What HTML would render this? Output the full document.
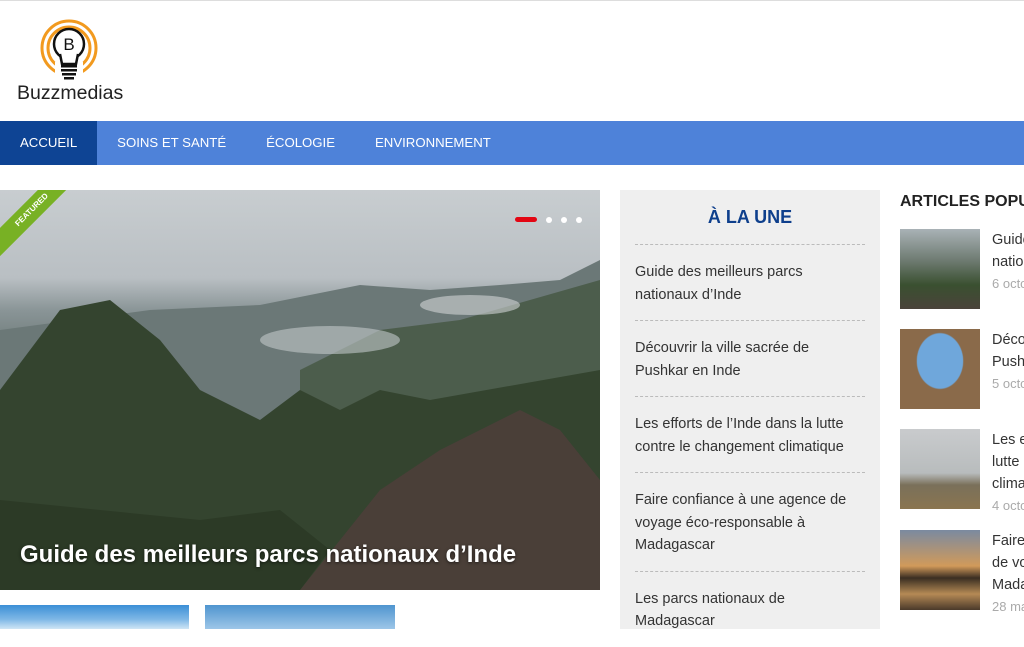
<!DOCTYPE html>
<html><head><meta charset="utf-8">
<style>
*{margin:0;padding:0;box-sizing:border-box}
body{width:1024px;height:629px;overflow:hidden;background:#fff;font-family:"Liberation Sans","DejaVu Sans",sans-serif;position:relative}
.topline{position:absolute;top:0;left:0;width:1024px;height:1px;background:#ddd}
.logo{position:absolute;left:17px;top:19px;width:110px;height:90px}
.logo .name{position:absolute;left:0;top:63px;font-size:19.5px;color:#222;white-space:nowrap}
nav{position:absolute;top:121px;left:0;width:1024px;height:44px;background:#4e82d9}
nav a{float:left;height:44px;line-height:44px;padding:0 20px;color:#fff;font-size:13.2px;text-decoration:none}
nav a.on{background:#0e4494}
.hero{position:absolute;left:0;top:190px;width:600px;height:400px;overflow:hidden;
background:linear-gradient(180deg,#c8cdd0 0%,#b9bfc3 22%,#8a9597 30%,#6d7a78 40%,#4d5b4e 55%,#3a4834 70%,#2f3a2a 100%)}
.hero h2{position:absolute;left:20px;top:351px;color:#fff;font-size:24px;font-weight:bold;text-shadow:0 1px 3px rgba(0,0,0,.6);white-space:nowrap}
.dots{position:absolute;left:515px;top:21px}
.dots span{display:inline-block;width:6px;height:6px;border-radius:3px;background:#fff;margin-left:9px;vertical-align:middle}
.dots span.a{width:22px;height:5px;background:#e30613;margin-left:0}
.feat{position:absolute;left:-28px;top:10px;width:120px;height:20px;background:#78b124;transform:rotate(-45deg);color:#fff;font-size:8px;font-weight:bold;text-align:center;line-height:20px}
.une{position:absolute;left:620px;top:190px;width:260px;height:439px;background:#efefef}
.une h3{text-align:center;color:#0e3f8c;font-size:18px;font-weight:bold;margin-top:17px;height:37px}
.une .item{margin:0 15px;border-top:1px dashed #bbb;padding:16px 0 14px;font-size:14.5px;line-height:22.5px;color:#333}
.pop{position:absolute;left:900px;top:190px;width:124px;height:439px;overflow:hidden}
.pop h3{font-size:16px;font-weight:bold;color:#222;white-space:nowrap;margin-top:3px}
.pi{position:absolute;left:0;width:200px}
.pi .t{position:absolute;left:0;top:0;width:80px;height:80px}
.pi .x{position:absolute;left:92px;top:0;font-size:14.5px;line-height:22px;color:#333;white-space:nowrap}
.pi .d{color:#aaa;font-size:13px}
.b1{position:absolute;left:0;top:605px;width:189px;height:24px;background:linear-gradient(180deg,#3b8fd6,#7fb8e6 60%,#cfe5f5)}
.b2{position:absolute;left:205px;top:605px;width:190px;height:24px;background:linear-gradient(180deg,#4f95cf,#9dc6e8)}
</style></head><body>
<div class="topline"></div>
<div class="logo">
<svg width="110" height="64" viewBox="0 0 110 64">
<circle cx="52" cy="29" r="27" fill="none" stroke="#f29a1f" stroke-width="3"/>
<circle cx="52" cy="29" r="21" fill="none" stroke="#f29a1f" stroke-width="3"/>
<rect x="38" y="43" width="28" height="21" fill="#fff"/>
<circle cx="52" cy="25" r="15" fill="#fff" stroke="#111" stroke-width="2.5"/>
<path d="M43 35 L45 45 L59 45 L61 35" fill="#fff" stroke="#111" stroke-width="2.5"/>
<rect x="44" y="46" width="16" height="2.5" fill="#111"/><rect x="44" y="50" width="16" height="2.5" fill="#111"/><rect x="45" y="54" width="14" height="2.5" fill="#111"/><rect x="47" y="58" width="10" height="2.5" fill="#111"/>
<text x="52" y="31" text-anchor="middle" font-family="Liberation Sans,sans-serif" font-size="17" fill="#111">B</text>
</svg>
<div class="name">Buzzmedias</div>
</div>
<nav><a class="on">ACCUEIL</a><a>SOINS ET SANTÉ</a><a>ÉCOLOGIE</a><a>ENVIRONNEMENT</a></nav>
<div class="hero">
<svg width="600" height="400" style="position:absolute;left:0;top:0">
<path d="M0 140 L150 120 L260 115 L360 95 L430 100 L500 95 L560 90 L600 70 L600 400 L0 400Z" fill="#6b7877"/>
<path d="M300 180 L380 140 L460 130 L530 110 L600 90 L600 400 L300 400Z" fill="#4c5d4c"/>
<path d="M0 200 L60 120 L110 110 L160 150 L200 200 L260 230 L300 200 L340 220 L380 200 L430 210 L600 180 L600 400 L0 400Z" fill="#34442f"/>
<path d="M300 400 L380 300 L440 260 L520 220 L560 240 L600 290 L600 400Z" fill="#4a3f38"/>
<path d="M0 400 L0 310 L100 320 L200 330 L280 320 L330 360 L300 400Z" fill="#2c3a26"/>
<ellipse cx="330" cy="150" rx="70" ry="14" fill="#c2c8ca" opacity=".6"/>
<ellipse cx="470" cy="115" rx="50" ry="10" fill="#d0d4d6" opacity=".6"/>
</svg>
<div class="feat">FEATURED</div>
<div class="dots"><span class="a"></span><span></span><span></span><span></span></div>
<h2>Guide des meilleurs parcs nationaux d’Inde</h2>
</div>
<div class="une">
<h3>À LA UNE</h3>
<div class="item">Guide des meilleurs parcs<br>nationaux d’Inde</div>
<div class="item">Découvrir la ville sacrée de<br>Pushkar en Inde</div>
<div class="item">Les efforts de l’Inde dans la lutte<br>contre le changement climatique</div>
<div class="item">Faire confiance à une agence de<br>voyage éco-responsable à<br>Madagascar</div>
<div class="item">Les parcs nationaux de<br>Madagascar</div>
</div>
<div class="pop">
<h3>ARTICLES POPULAIRES</h3>
<div class="pi" style="top:39px"><div class="t" style="background:linear-gradient(180deg,#a9b2b6,#6d7a70 40%,#3a5030 70%,#4a433a)"></div><div class="x">Guide des meilleurs<br>nationaux<br><span class="d">6 octobre</span></div></div>
<div class="pi" style="top:139px"><div class="t" style="background:radial-gradient(ellipse at 50% 40%,#6fa7db 40%,#8a6a4a 42%);"></div><div class="x">Découvrir<br>Pushkar<br><span class="d">5 octobre</span></div></div>
<div class="pi" style="top:239px"><div class="t" style="background:linear-gradient(180deg,#c9cbcd,#b8bcbd 55%,#7a705a 70%,#8a7550)"></div><div class="x">Les efforts<br>lutte contre<br>climatique<br><span class="d">4 octobre</span></div></div>
<div class="pi" style="top:340px"><div class="t" style="background:linear-gradient(180deg,#7b8aa0,#d19a5a 45%,#3a2e22 60%,#b58a55 80%,#4a3a2a)"></div><div class="x">Faire confiance<br>de voyage<br>Madagascar<br><span class="d">28 mai</span></div></div>
</div>
<div class="b1"></div><div class="b2"></div>
</body></html>
